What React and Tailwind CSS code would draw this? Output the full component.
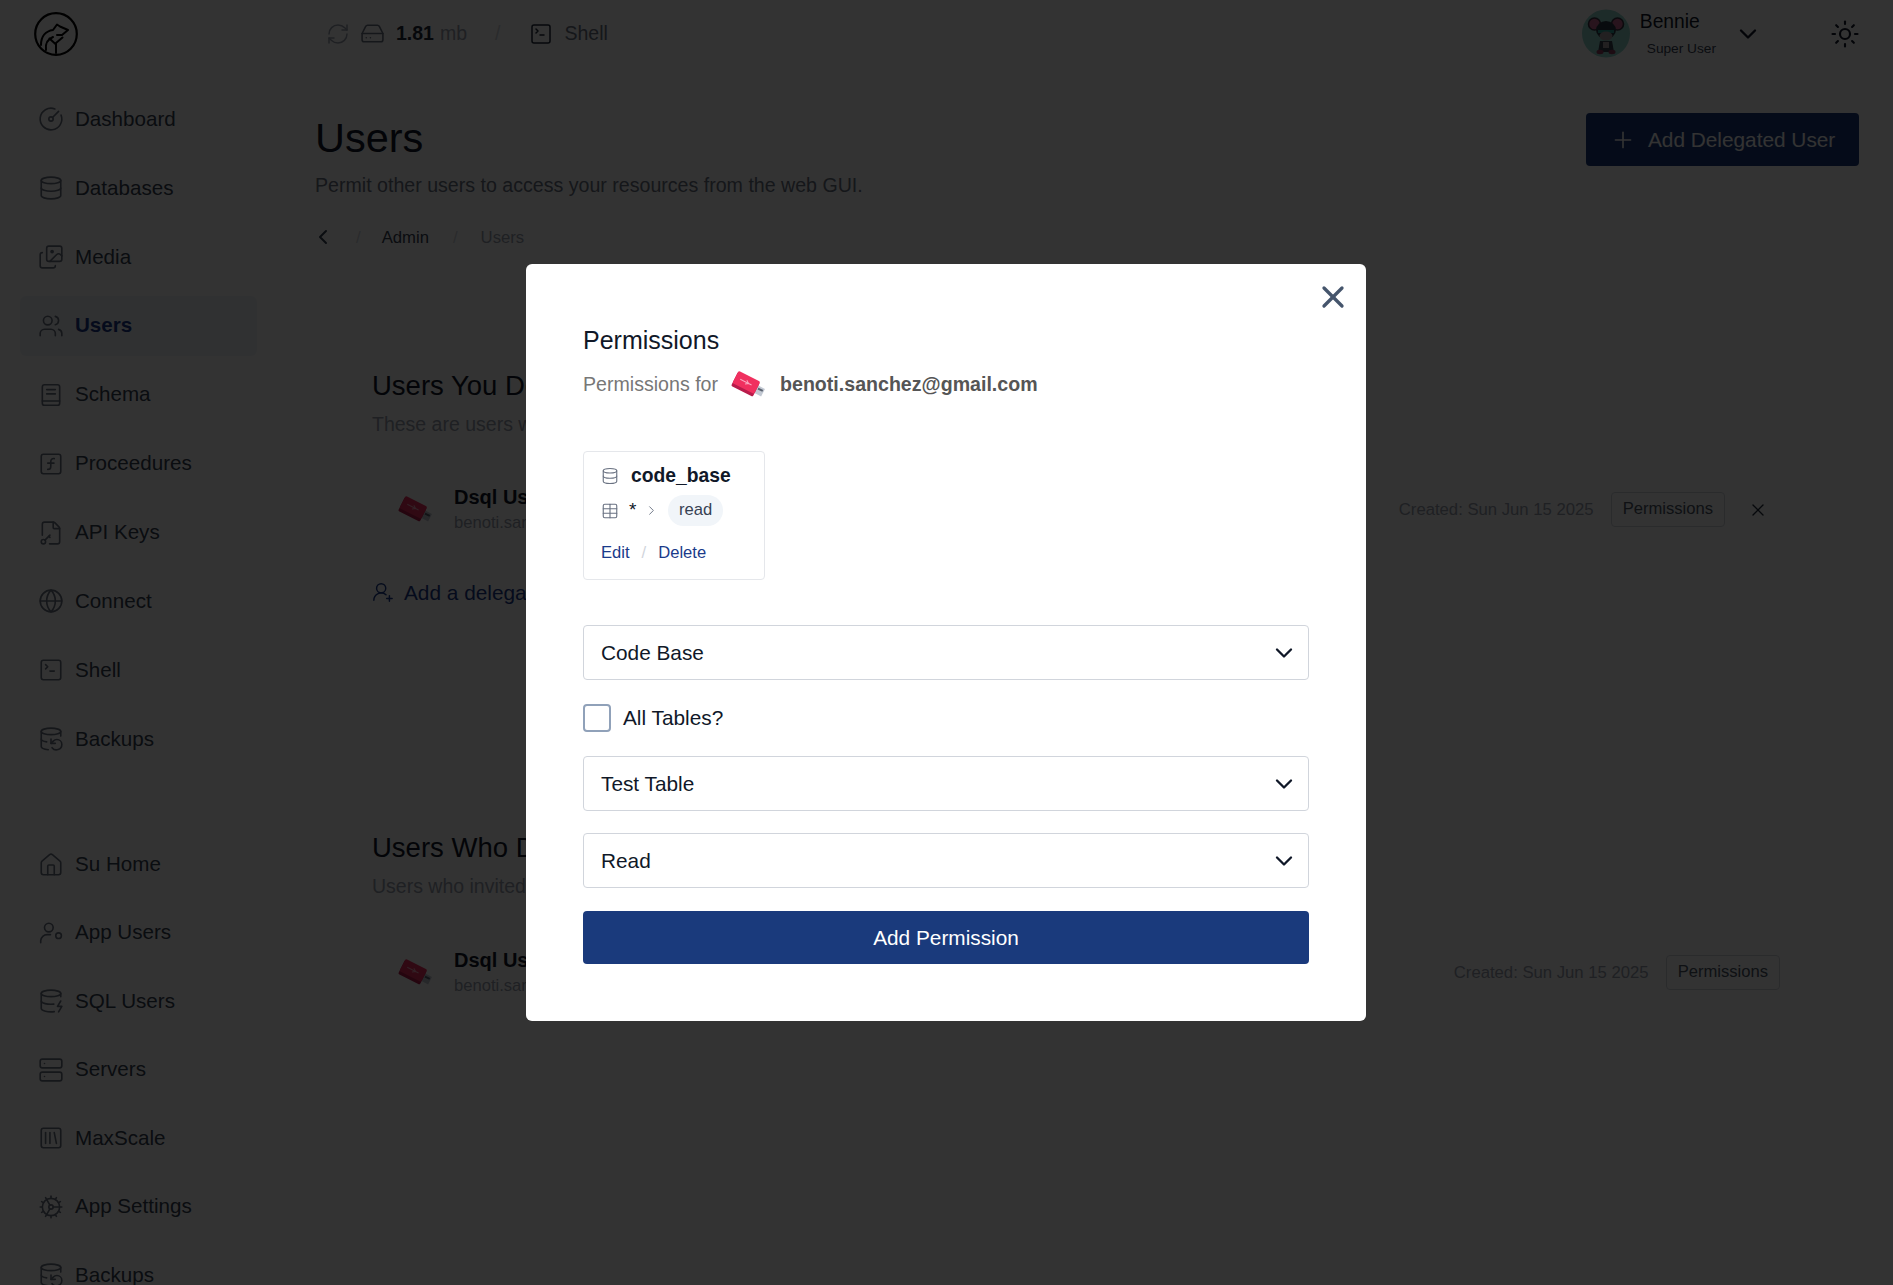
import React from "react";
import {
  CircleGauge, Database, Images, Users, SquareFunction, FileKey2, Globe, SquareTerminal,
  DatabaseBackup, House, DatabaseZap, Server, SquareLibrary, Cog, RefreshCw, HardDrive,
  UserRoundPlus, ChevronDown, ChevronLeft, ChevronRight, Sun, Plus, X, Table,
} from "lucide-react";

const SchemaIcon = ({ size = 26, strokeWidth = 1.5, className = "" }) => (
  <svg width={size} height={size} viewBox="0 0 24 24" fill="none" stroke="currentColor" strokeWidth={strokeWidth} strokeLinecap="round" strokeLinejoin="round" className={className}>
    <rect x="4" y="2.5" width="16" height="19" rx="2" />
    <path d="M4 17.5h16M8 7h8M8 11h8" />
  </svg>
);

const AppUsersIcon = ({ size = 26, strokeWidth = 1.5, className = "" }) => (
  <svg width={size} height={size} viewBox="0 0 24 24" fill="none" stroke="currentColor" strokeWidth={strokeWidth} strokeLinecap="round" strokeLinejoin="round" className={className}>
    <circle cx="10" cy="7" r="4" />
    <circle cx="19" cy="14.5" r="2.6" />
    <path d="M2.5 21v-2a6 6 0 0 1 6-5.5h3" />
  </svg>
);

const Logo = () => (
  <svg width="46" height="46" viewBox="0 0 46 46" fill="none" stroke="#000" strokeWidth="2" strokeLinecap="round" strokeLinejoin="round">
    <circle cx="23" cy="23" r="20.8" strokeWidth="2.2" />
    <path d="M23 42V32M23 33.5l-6.5-6M23 32l6.5-5.5" />
    <path d="M8 34C8 25 13 20 20 19l4-5.5 3 2 8 3.5-6 5h-5" />
    <path d="M13 39c-1-7 2-11 7-13" />
  </svg>
);

const Usb = () => (
  <svg width="38" height="28" viewBox="0 0 36 26" className="shrink-0">
    <g transform="rotate(27 18 13)">
      <rect x="26" y="9" width="8" height="8" fill="#c3c9d3" />
      <rect x="28" y="10.8" width="5" height="1.8" fill="#59616e" />
      <rect x="4" y="6" width="23" height="15" rx="1.5" fill="#b91c4b" />
      <rect x="4" y="5" width="23" height="13" rx="1.5" fill="#f0305f" />
      <path d="M9 11.5h12M15 9.5l3 2-3 2" stroke="#f9a8c0" strokeWidth="0.9" fill="none" />
    </g>
  </svg>
);

const Avatar = () => (
  <svg width="48" height="49" viewBox="0 0 48 49" className="shrink-0">
    <circle cx="24" cy="24.5" r="24" fill="#8fd6cc" />
    <circle cx="12.5" cy="15" r="6" fill="#c9668f" stroke="#3a3344" strokeWidth="1.6" />
    <circle cx="35.5" cy="15" r="6" fill="#c9668f" stroke="#3a3344" strokeWidth="1.6" />
    <ellipse cx="24" cy="21" rx="10" ry="9" fill="#2c3a46" />
    <rect x="16" y="21" width="16" height="3" fill="#2fa69c" />
    <ellipse cx="24" cy="27" rx="6.5" ry="4.5" fill="#a99fa3" />
    <path d="M18 32h12l2 11H16z" fill="#3a4250" />
    <path d="M21 33h6v6h-6z" fill="#a99fa3" />
    <ellipse cx="18" cy="43" rx="3.5" ry="2.2" fill="#8f3f60" />
    <ellipse cx="30" cy="43" rx="3.5" ry="2.2" fill="#8f3f60" />
  </svg>
);

const groupA = [
  ["Dashboard", CircleGauge],
  ["Databases", Database],
  ["Media", Images],
  ["Users", Users, true],
  ["Schema", SchemaIcon],
  ["Proceedures", SquareFunction],
  ["API Keys", FileKey2],
  ["Connect", Globe],
  ["Shell", SquareTerminal],
  ["Backups", DatabaseBackup],
];

const groupB = [
  ["Su Home", House],
  ["App Users", AppUsersIcon],
  ["SQL Users", DatabaseZap],
  ["Servers", Server],
  ["MaxScale", SquareLibrary],
  ["App Settings", Cog],
  ["Backups", DatabaseBackup],
];

function NavItem({ label, Icon, active }) {
  return (
    <a className={`flex h-[60px] w-[237px] shrink-0 items-center gap-[11px] rounded-md pl-[18px] text-[20.6px] ${active ? "bg-slate-100 font-bold text-[#1a3a8a]" : "text-gray-700"}`}>
      <Icon size={26} strokeWidth={1.5} className="text-gray-500" />
      <span>{label}</span>
    </a>
  );
}

function UserRow({ first }) {
  return (
    <div className={`flex h-[51px] items-center pl-[24px] ${first ? "pr-3" : ""}`}>
      <Usb />
      <div className="ml-[20px] flex flex-col">
        <span className="text-[20px] leading-[26px] font-bold text-gray-900">Dsql User</span>
        <span className="text-[16.6px] leading-[25px] text-gray-400">benoti.sanchez@gmail.com</span>
      </div>
      <span className="ml-auto text-[16.7px] text-gray-400">Created: Sun Jun 15 2025</span>
      <button className="ml-[17px] h-[35px] rounded border border-gray-300 px-[11px] text-[16.6px] text-gray-600">Permissions</button>
      {first && <X size={20} strokeWidth={1.6} className="ml-[23px] text-gray-800" />}
    </div>
  );
}

function SelectBox({ label, className = "" }) {
  return (
    <div className={`flex h-[55px] items-center justify-between rounded border border-gray-300 pr-[10.5px] pl-[17px] text-[20.8px] text-gray-900 ${className}`}>
      <span>{label}</span>
      <ChevronDown size={28} strokeWidth={2} className="text-gray-900" />
    </div>
  );
}

export default function App() {
  return (
    <div className="relative h-[1285px] w-full overflow-hidden bg-white font-['Liberation_Sans',Arial,sans-serif]">
      <header className="flex h-[67px] items-center pr-[33px] pl-[33px]">
        <Logo />
        <div className="ml-[247px] flex items-center text-[19.5px] text-gray-600">
          <RefreshCw size={24} strokeWidth={1.5} className="text-gray-400" />
          <HardDrive size={25} strokeWidth={1.5} className="ml-[10px] text-gray-500" />
          <b className="ml-[11px] font-bold text-gray-800">1.81</b>
          <span className="ml-[6px] text-gray-400">mb</span>
          <span className="ml-[28px] text-gray-300">/</span>
          <SquareTerminal size={24} strokeWidth={1.5} className="ml-[29px] text-gray-800" />
          <span className="ml-[11px] text-gray-500">Shell</span>
        </div>
        <div className="ml-auto flex items-center">
          <Avatar />
          <div className="ml-[10px] flex flex-col">
            <span className="text-[19.3px] leading-[26px] text-gray-900">Bennie</span>
            <span className="mt-[4px] ml-[7px] text-[13.7px] leading-[20px] text-gray-700">Super User</span>
          </div>
          <ChevronDown size={28} strokeWidth={2} className="ml-[18px] text-gray-900" />
          <Sun size={30} strokeWidth={1.7} className="ml-[68px] text-gray-900" />
        </div>
      </header>

      <div className="flex">
        <aside className="w-[315px] shrink-0 pt-[22.2px] pl-5">
          <nav className="flex flex-col gap-[8.9px]">
            {groupA.map(([label, Icon, active]) => (
              <NavItem key={label} label={label} Icon={Icon} active={active} />
            ))}
          </nav>
          <nav className="mt-[65.3px] flex flex-col gap-[8.45px]">
            {groupB.map(([label, Icon]) => (
              <NavItem key={label} label={label} Icon={Icon} />
            ))}
          </nav>
        </aside>

        <main className="min-w-0 flex-1 pt-[46px] pr-[34px]">
          <div className="flex items-start justify-between">
            <div className="mt-[1.2px]">
              <h1 className="text-[41.5px] leading-[48px] font-normal text-gray-900">Users</h1>
              <p className="mt-[9px] text-[19.6px] leading-[28px] text-gray-500">Permit other users to access your resources from the web GUI.</p>
            </div>
            <button className="flex h-[53px] w-[273px] items-center rounded bg-[#1a3a7c] pl-[24px] text-[20.8px] text-white">
              <Plus size={26} strokeWidth={1.5} className="mr-[12px]" />
              Add Delegated User
            </button>
          </div>

          <div className="mt-[26.2px] flex h-6 items-center text-[16.7px]">
            <ChevronLeft size={24} strokeWidth={2} className="-ml-[4px] text-gray-700" />
            <span className="ml-[21px] text-gray-300">/</span>
            <span className="ml-[21px] text-gray-700">Admin</span>
            <span className="ml-[24px] text-gray-300">/</span>
            <span className="ml-[23px] text-gray-400">Users</span>
          </div>

          <div className="mt-[119px] mr-[79px] ml-[57px]">
            <h2 className="text-[27.5px] leading-[36px] font-normal text-gray-900">Users You Delegated Access To</h2>
            <p className="mt-[5.6px] text-[19.5px] leading-[28px] text-gray-400">These are users who have been granted access to your resources</p>
            <div className="mt-[46.4px]"><UserRow first /></div>
            <a className="mt-[43px] flex h-[28px] items-center text-[20.8px] text-[#1a3a8a]">
              <UserRoundPlus size={22} strokeWidth={1.6} className="mr-[10px]" />
              Add a delegated user
            </a>

            <h2 className="mt-[224px] text-[27.5px] leading-[36px] font-normal text-gray-900">Users Who Delegated Access To You</h2>
            <p className="mt-[6px] text-[19.5px] leading-[28px] text-gray-400">Users who invited you to access their resources</p>
            <div className="mt-[47px]"><UserRow /></div>
          </div>
        </main>
      </div>

      <div className="absolute inset-0 flex items-center justify-center bg-black/80 pr-px">
        <div role="dialog" className="relative w-[840px] rounded-md bg-white p-[57px]">
          <button className="absolute top-[15px] right-[15px] text-slate-600">
            <X size={36} strokeWidth={2.2} />
          </button>

          <h3 className="text-[25px] leading-[38px] font-normal text-gray-900">Permissions</h3>
          <div className="mt-[14px] flex h-6 items-center">
            <span className="text-[19.6px] text-[#777]">Permissions for</span>
            <span className="ml-[11px]"><Usb /></span>
            <span className="ml-[13px] text-[19.6px] font-bold text-[#555]">benoti.sanchez@gmail.com</span>
          </div>

          <div className="mt-[54px] w-[182px] rounded border border-gray-200 pt-[12px] pr-2 pb-[16px] pl-[17px]">
            <div className="flex h-6 items-center">
              <Database size={18} strokeWidth={1.5} className="text-gray-500" />
              <span className="ml-[12px] text-[19.3px] font-bold text-gray-900">code_base</span>
            </div>
            <div className="mt-[7px] flex h-[31px] items-center">
              <Table size={18} strokeWidth={1.5} className="text-gray-500" />
              <span className="ml-[10px] text-[19px] text-gray-900">*</span>
              <ChevronRight size={15} strokeWidth={1.5} className="ml-[7.5px] text-gray-500" />
              <span className="ml-[9px] flex h-[31px] items-center rounded-full bg-slate-100 px-[11px] text-[16.6px] text-gray-700">read</span>
            </div>
            <div className="mt-[17px] flex h-5 items-center text-[16.6px] text-[#1a3a8a]">
              <span>Edit</span>
              <span className="mx-[12px] text-gray-300">/</span>
              <span>Delete</span>
            </div>
          </div>

          <SelectBox label="Code Base" className="mt-[45px]" />
          <label className="mt-[24px] flex h-[28px] items-center gap-[12px] text-[20.8px] text-gray-900">
            <span className="h-[28px] w-[28px] rounded border-2 border-slate-400" />
            All Tables?
          </label>
          <SelectBox label="Test Table" className="mt-[24px]" />
          <SelectBox label="Read" className="mt-[22px]" />
          <button className="mt-[23px] flex h-[53px] w-full items-center justify-center rounded bg-[#1a3a7c] text-[20.8px] text-white">Add Permission</button>
        </div>
      </div>
    </div>
  );
}
